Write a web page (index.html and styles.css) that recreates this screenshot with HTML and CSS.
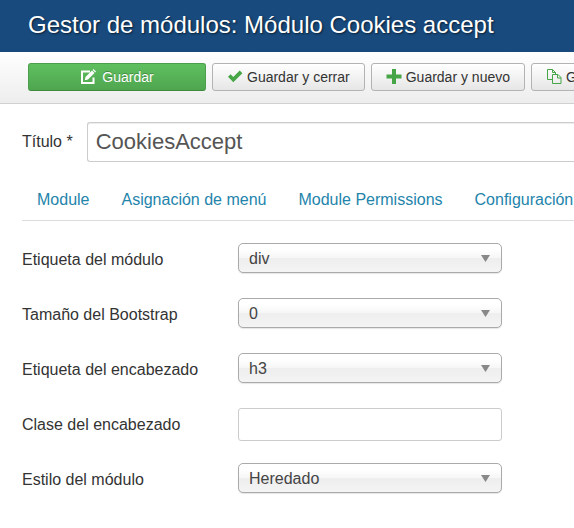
FILE: index.html
```
<!DOCTYPE html>
<html lang="es">
<head>
    <meta charset="UTF-8">
    <meta name="viewport" content="width=device-width, initial-scale=1.0">
    <title>Gestor de módulos</title>
    <link rel="stylesheet" href="styles.css">
</head>
<body>
    <header class="header">
        <h1 class="page-title">Gestor de módulos: Módulo Cookies accept</h1>
    </header>

    <div class="toolbar">
        <button type="button" class="btn btn-success">
            <svg width="16" height="16" viewBox="0 0 16 16" aria-hidden="true">
                <path d="M10 2.500H2V14h11.500V8.500" fill="none" stroke="#fff" stroke-width="2"/>
                <path d="M4.800 11.300l.7-3.200L12 1.600l2.500 2.500L8 10.600z" fill="#fff"/>
                <path d="M12.700.9l.8-.8L16 2.600l-.8.8z" fill="#fff"/>
            </svg>
            Guardar
        </button>
        <button type="button" class="btn">
            <svg width="16" height="16" viewBox="0 0 16 16" aria-hidden="true">
                <path d="M1 7.800L3.600 5.200l2.700 2.700L12.700 1.500 15.400 4.200 6.300 13.300z" fill="#46a546"/>
            </svg>
            Guardar y cerrar
        </button>
        <button type="button" class="btn">
            <svg width="16" height="16" viewBox="0 0 16 16" aria-hidden="true">
                <path d="M6 0h4V5.500h5.500v4H10v5.500H6V9.500H.5v-4H6z" fill="#46a546"/>
            </svg>
            Guardar y nuevo
        </button>
        <button type="button" class="btn">
            <svg width="16" height="16" viewBox="0 0 16 16" aria-hidden="true">
                <g fill="none" stroke="#46a546">
                    <path d="M6.500 10.500h-5v-10h5l3 3v2"/>
                    <path d="M6.500.5v3h3"/>
                    <path d="M6.500 5.500h5.500l3 3v6H6.500z"/>
                    <path d="M11.500 5.500v3.500H15"/>
                </g>
            </svg>
            Guardar como copia
        </button>
    </div>

    <main>
        <form class="module-form">
            <div class="title-group">
                <label for="title">Título *</label>
                <input type="text" id="title" name="title" class="title-input" value="CookiesAccept" required>
            </div>

            <nav class="tabs">
                <a href="#module">Module</a>
                <a href="#menu">Asignación de menú</a>
                <a href="#permissions">Module Permissions</a>
                <a href="#config">Configuración</a>
            </nav>

            <div class="control-group">
                <label for="moduleTag">Etiqueta del módulo</label>
                <select id="moduleTag" class="control">
                    <option>div</option>
                </select>
            </div>
            <div class="control-group">
                <label for="bootstrapSize">Tamaño del Bootstrap</label>
                <select id="bootstrapSize" class="control">
                    <option>0</option>
                </select>
            </div>
            <div class="control-group">
                <label for="headerTag">Etiqueta del encabezado</label>
                <select id="headerTag" class="control">
                    <option>h3</option>
                </select>
            </div>
            <div class="control-group">
                <label for="headerClass">Clase del encabezado</label>
                <input type="text" id="headerClass" class="control">
            </div>
            <div class="control-group">
                <label for="moduleStyle">Estilo del módulo</label>
                <select id="moduleStyle" class="control">
                    <option>Heredado</option>
                </select>
            </div>
        </form>
    </main>
</body>
</html>
```

FILE: styles.css
```
* {
    box-sizing: border-box;
}

body {
    margin: 0;
    font-family: "Liberation Sans", Arial, sans-serif;
    font-size: 16px;
    color: #333;
    background-color: #fff;
}

.header {
    padding: 9px 28px 11px;
    background-color: #184a7d;
}

.page-title {
    margin: 0;
    font-size: 24px;
    font-weight: normal;
    line-height: 32px;
    color: #fff;
    white-space: nowrap;
    text-shadow: 1px 1px 2px rgba(0, 0, 0, 0.6);
}

/* Toolbar */
.toolbar {
    display: flex;
    gap: 6px;
    padding: 11px 0 12px 28px;
    overflow: hidden;
    background-image: linear-gradient(#fff, #ededed);
    border-bottom: 1px solid #d0d0d0;
}

.btn {
    display: flex;
    flex: none;
    align-items: center;
    justify-content: center;
    gap: 4px;
    height: 28px;
    padding: 0 14px;
    font-family: inherit;
    font-size: 14px;
    color: #333;
    white-space: nowrap;
    background-image: linear-gradient(#fff, #e6e6e6);
    border: 1px solid #b3b3b3;
    border-radius: 3px;
    cursor: pointer;
}

.btn-success {
    width: 178px;
    gap: 6px;
    color: #fff;
    background-image: linear-gradient(#5fbf5f, #4fa64f);
    border-color: #4c9f4c #4c9f4c #3f8a3f;
    text-shadow: 0 -1px 0 rgba(0, 0, 0, 0.25);
}

/* Form */
.module-form {
    padding: 18px 0 0 22px;
}

.title-group {
    display: flex;
    align-items: center;
    gap: 14px;
}

.title-input {
    flex: 1;
    min-width: 0;
    height: 40px;
    padding: 0 8px;
    font-family: inherit;
    font-size: 22px;
    color: #555;
    border: 1px solid #ccc;
    border-right: 0;
    border-radius: 3px 0 0 3px;
    box-shadow: inset 0 1px 1px rgba(0, 0, 0, 0.075);
}

.tabs {
    display: flex;
    gap: 32px;
    margin: 18px 0 22px;
    padding: 8px 0 9px 15px;
    line-height: 23px;
    overflow: hidden;
    white-space: nowrap;
    border-bottom: 1px solid #ddd;
}

.tabs a {
    color: #2384ab;
    text-decoration: none;
}

.tabs a:hover {
    text-decoration: underline;
}

.control-group {
    display: grid;
    grid-template-columns: 216px 264px;
    align-items: start;
    margin-bottom: 21px;
    line-height: 34px;
}

.control {
    width: 100%;
    height: 33px;
    padding: 0 10px;
    font-family: inherit;
    font-size: 16px;
    color: #444;
    background-color: #fff;
    border: 1px solid #ccc;
    border-radius: 3px;
}

select.control {
    height: 30px;
    appearance: none;
    background-image:
        url("data:image/svg+xml,%3Csvg xmlns='http://www.w3.org/2000/svg' width='9' height='7'%3E%3Cpath d='M0 0h9L4.500 7z' fill='%23888'/%3E%3C/svg%3E"),
        linear-gradient(#fff 20%, #f6f6f6 50%, #eee 52%, #f4f4f4 100%);
    background-repeat: no-repeat;
    background-position: right 11px center, 0 0;
    border-color: #aaa;
    border-radius: 5px;
    box-shadow: 0 1px 1px rgba(0, 0, 0, 0.1);
}
```
